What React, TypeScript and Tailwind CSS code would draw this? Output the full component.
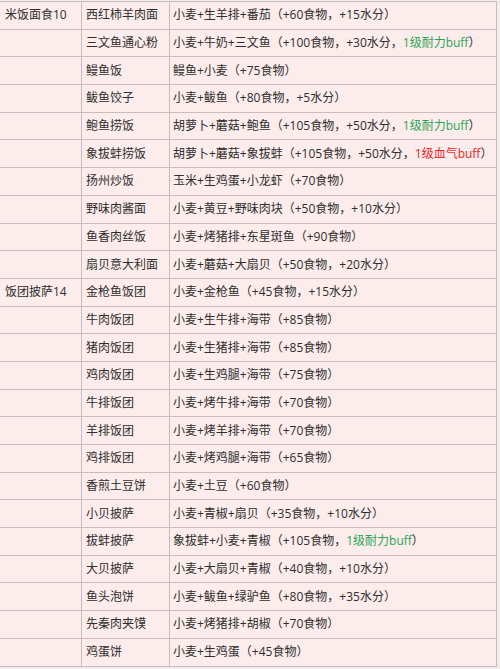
const rows: { group?: string; name: string; recipe: string; buff?: { text: string; tone: 'green' | 'red' } }[] = [
  { group: '米饭面食10', name: '西红柿羊肉面', recipe: '小麦+生羊排+番茄（+60食物，+15水分）' },
  { name: '三文鱼通心粉', recipe: '小麦+牛奶+三文鱼（+100食物，+30水分，', buff: { text: '1级耐力buff', tone: 'green' } },
  { name: '鳗鱼饭', recipe: '鳗鱼+小麦（+75食物）' },
  { name: '鲅鱼饺子', recipe: '小麦+鲅鱼（+80食物，+5水分）' },
  { name: '鲍鱼捞饭', recipe: '胡萝卜+蘑菇+鲍鱼（+105食物，+50水分，', buff: { text: '1级耐力buff', tone: 'green' } },
  { name: '象拔蚌捞饭', recipe: '胡萝卜+蘑菇+象拔蚌（+105食物，+50水分，', buff: { text: '1级血气buff', tone: 'red' } },
  { name: '扬州炒饭', recipe: '玉米+生鸡蛋+小龙虾（+70食物）' },
  { name: '野味肉酱面', recipe: '小麦+黄豆+野味肉块（+50食物，+10水分）' },
  { name: '鱼香肉丝饭', recipe: '小麦+烤猪排+东星斑鱼（+90食物）' },
  { name: '扇贝意大利面', recipe: '小麦+蘑菇+大扇贝（+50食物，+20水分）' },
  { group: '饭团披萨14', name: '金枪鱼饭团', recipe: '小麦+金枪鱼（+45食物，+15水分）' },
  { name: '牛肉饭团', recipe: '小麦+生牛排+海带（+85食物）' },
  { name: '猪肉饭团', recipe: '小麦+生猪排+海带（+85食物）' },
  { name: '鸡肉饭团', recipe: '小麦+生鸡腿+海带（+75食物）' },
  { name: '牛排饭团', recipe: '小麦+烤牛排+海带（+70食物）' },
  { name: '羊排饭团', recipe: '小麦+烤羊排+海带（+70食物）' },
  { name: '鸡排饭团', recipe: '小麦+烤鸡腿+海带（+65食物）' },
  { name: '香煎土豆饼', recipe: '小麦+土豆（+60食物）' },
  { name: '小贝披萨', recipe: '小麦+青椒+扇贝（+35食物，+10水分）' },
  { name: '拔蚌披萨', recipe: '象拔蚌+小麦+青椒（+105食物，', buff: { text: '1级耐力buff', tone: 'green' } },
  { name: '大贝披萨', recipe: '小麦+大扇贝+青椒（+40食物，+10水分）' },
  { name: '鱼头泡饼', recipe: '小麦+鲅鱼+绿驴鱼（+80食物，+35水分）' },
  { name: '先秦肉夹馍', recipe: '小麦+烤猪排+胡椒（+70食物）' },
  { name: '鸡蛋饼', recipe: '小麦+生鸡蛋（+45食物）' },
];

export default function App() {
  return (
    <div className="w-[500px] h-[669px] bg-[#f1ebeb] overflow-hidden pt-px">
      <div
        className="w-[497px] border-t border-r border-[#c6bebe] bg-[#fcecec] text-[12px] text-[#2e2e2e] leading-none"
        style={{ fontFamily: '"Open Sans", "Noto Sans CJK SC", sans-serif' }}
      >
        {rows.map((row) => (
          <div key={row.name} className="grid grid-cols-[82px_88px_1fr] h-[27.7px] border-b border-[#c6bebe]">
            <div className="flex items-center pl-[5px] border-r border-[#c6bebe]">{row.group}</div>
            <div className="flex items-center pl-[4px] border-r border-[#c6bebe]">{row.name}</div>
            <div className="flex items-center pl-[3px] whitespace-nowrap">
              {row.recipe}
              {row.buff && (
                <>
                  <span className={row.buff.tone === 'green' ? 'text-[#2ba553]' : 'text-[#ec1c24]'}>
                    {row.buff.text}
                  </span>
                  ）
                </>
              )}
            </div>
          </div>
        ))}
      </div>
    </div>
  );
}
